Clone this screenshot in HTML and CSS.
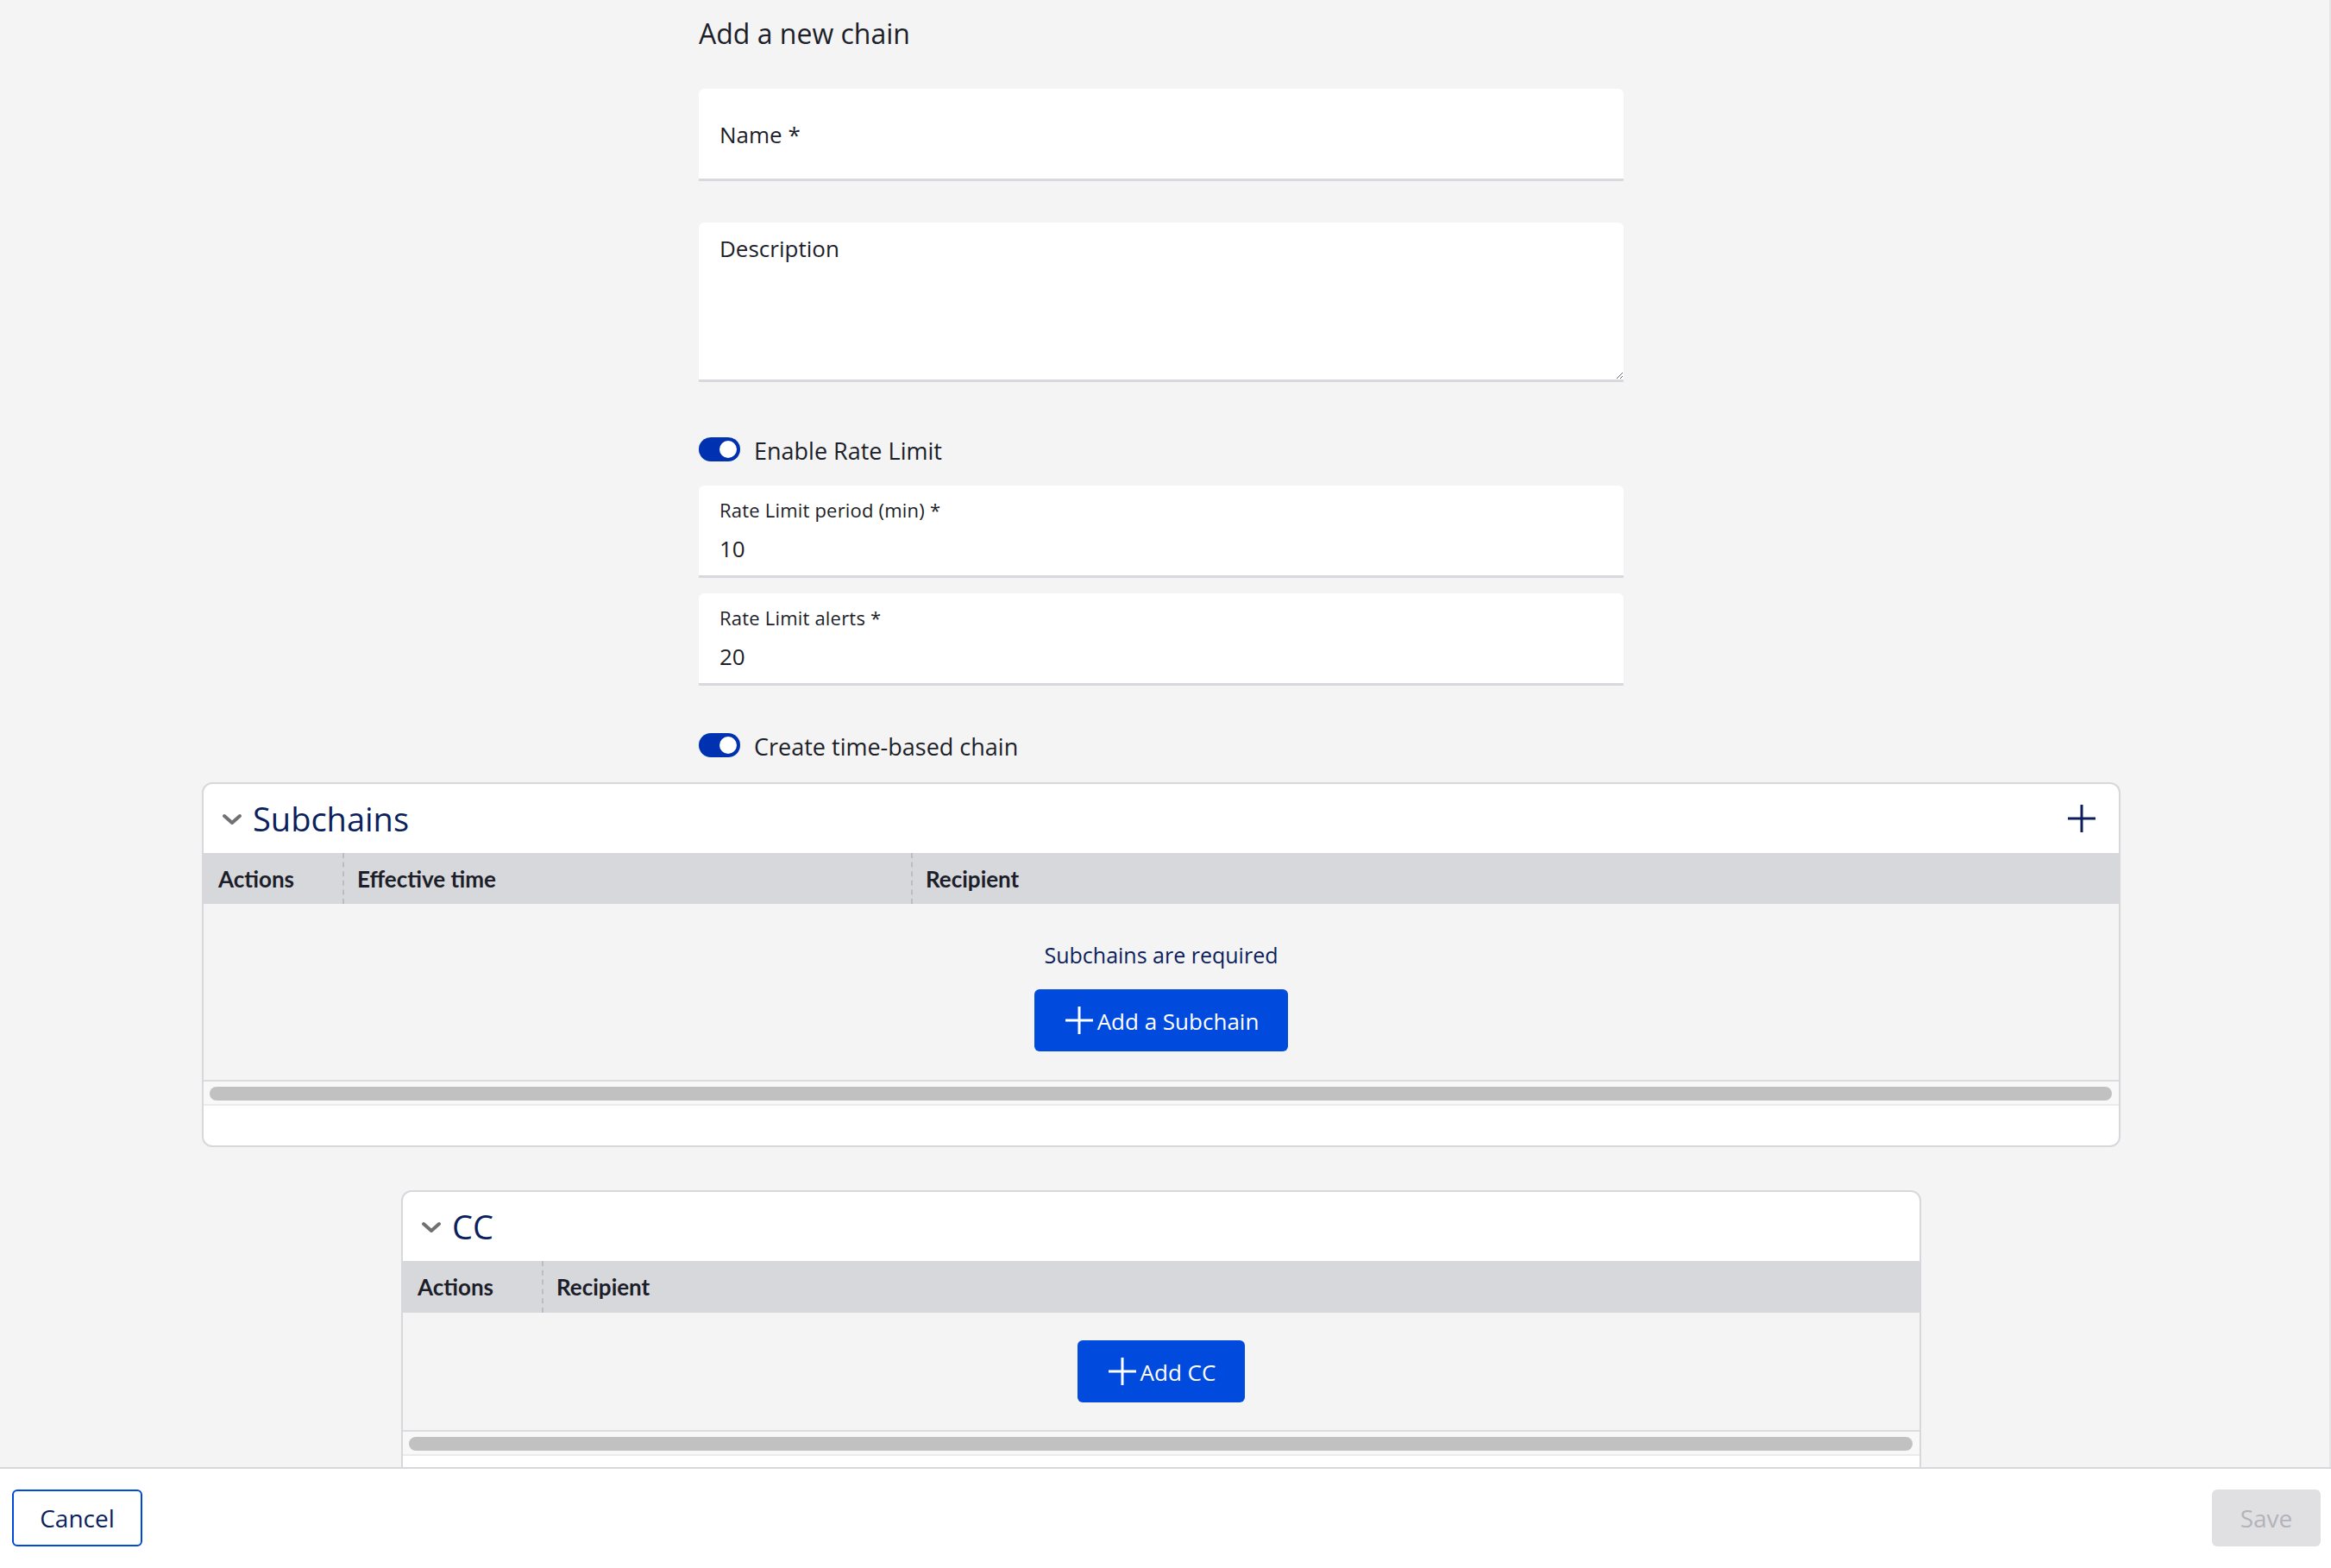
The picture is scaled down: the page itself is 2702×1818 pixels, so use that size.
FILE: index.html
```html
<!DOCTYPE html>
<html lang="en">
<head>
  <meta charset="UTF-8" />
  <meta name="viewport" content="width=device-width, initial-scale=1.0"/>
  <title>Add a new chain</title>
  <link rel="stylesheet" href="styles.css">
</head>
<body>

<div class="app">
  <div class="scroll">

    <div class="form">
      <h1 class="page-title">Add a new chain</h1>

      <!-- Name -->
      <div class="field field-name">
        <input type="text" name="name" placeholder="Name *" />
      </div>

      <!-- Description -->
      <div class="field field-desc">
        <textarea name="description" placeholder="Description"></textarea>
      </div>

      <div class="switch-row switch-rate">
        <span class="switch on"></span>
        <span class="switch-label">Enable Rate Limit</span>
      </div>

      <div class="field field-small">
        <label for="ratePeriod">Rate Limit period (min) *</label>
        <input type="text" id="ratePeriod" value="10" />
      </div>

      <div class="field field-small field-alerts">
        <label for="rateAlerts">Rate Limit alerts *</label>
        <input type="text" id="rateAlerts" value="20" />
      </div>

      <div class="switch-row switch-time">
        <span class="switch on"></span>
        <span class="switch-label">Create time-based chain</span>
      </div>
    </div>

    <!-- Subchains -->
    <section class="panel panel-sub">
      <div class="panel-head">
        <svg class="chevron" width="24" height="14" viewBox="0 0 24 14"><path d="M3 3 L12 11 L21 3" fill="none" stroke="#707174" stroke-width="4" stroke-linecap="round" stroke-linejoin="round"/></svg>
        <h2 class="panel-title">Subchains</h2>
        <svg class="head-plus" width="32" height="32" viewBox="0 0 32 32"><path d="M16 0 V32 M0 16 H32" stroke="#0b1f5e" stroke-width="3"/></svg>
      </div>
      <div class="table-head">
        <div class="col col-actions">Actions</div>
        <div class="col col-time">Effective time</div>
        <div class="col col-rest">Recipient</div>
      </div>
      <div class="table-body">
        <div class="empty-msg">Subchains are required</div>
        <button class="btn-add">
          <svg width="32" height="32" viewBox="0 0 32 32"><path d="M16 0 V32 M0 16 H32" stroke="#fff" stroke-width="3"/></svg>
          <span>Add a Subchain</span>
        </button>
      </div>
      <div class="hscroll"><div class="thumb"></div></div>
      <div class="panel-foot"></div>
    </section>

    <!-- CC -->
    <section class="panel panel-cc">
      <div class="panel-head">
        <svg class="chevron" width="24" height="14" viewBox="0 0 24 14"><path d="M3 3 L12 11 L21 3" fill="none" stroke="#707174" stroke-width="4" stroke-linecap="round" stroke-linejoin="round"/></svg>
        <h2 class="panel-title">CC</h2>
      </div>
      <div class="table-head">
        <div class="col col-actions">Actions</div>
        <div class="col col-rest">Recipient</div>
      </div>
      <div class="table-body cc-body">
        <button class="btn-add">
          <svg width="32" height="32" viewBox="0 0 32 32"><path d="M16 0 V32 M0 16 H32" stroke="#fff" stroke-width="3"/></svg>
          <span>Add CC</span>
        </button>
      </div>
      <div class="hscroll"><div class="thumb"></div></div>
      <div class="panel-foot"></div>
    </section>

  </div>

  <footer class="footer">
    <button class="btn-cancel">Cancel</button>
    <button class="btn-save" disabled>Save</button>
  </footer>
</div>

</body>
</html>
```

FILE: styles.css
```css
html, body { margin: 0; padding: 0; height: 100%; }
body { font-family: "Open Sans", "Noto Sans", sans-serif; background: #f4f4f4; color: #1c1e29; overflow: hidden; }

.app { display: flex; flex-direction: column; height: 100vh; }
.scroll { flex: 1; min-height: 0; overflow: hidden; display: flex; flex-direction: column; align-items: center; padding-right: 8px; border-right: 2px solid #e4e4e6; }

/* form */
.form { width: 1072px; flex-shrink: 0; }
.page-title { margin: 0; padding-top: 21px; font-size: 32px; line-height: 36px; font-weight: 400; color: #1c1e29; }

.field { background: #fff; border-radius: 6px 6px 0 0; border-bottom: 3px solid #d8d9de; box-sizing: border-box; }
.field input, .field textarea { display: block; width: 100%; box-sizing: border-box; border: none; outline: none; background: transparent; font-family: "Open Sans", "Noto Sans", sans-serif; color: #1c1e29; padding: 0; }
.field input::placeholder, .field textarea::placeholder { color: #1c1e29; opacity: 1; }

.field-name { margin-top: 46px; height: 107px; display: flex; align-items: center; padding: 2px 24px 0; }
.field-name input { font-size: 26px; line-height: 34px; height: 34px; }

.field-desc { margin-top: 48px; height: 185px; }
.field-desc textarea { height: 182px; padding: 14px 24px; font-size: 26px; line-height: 32px; resize: vertical; }

.switch-row { display: flex; align-items: center; gap: 16px; height: 28px; }
.switch-rate { margin-top: 64px; }
.switch-time { margin-top: 55px; }
.switch { width: 48px; height: 28px; border-radius: 14px; background: #0031b0; position: relative; flex-shrink: 0; }
.switch::after { content: ""; position: absolute; top: 4px; right: 4px; width: 20px; height: 20px; border-radius: 50%; background: #fff; }
.switch-label { font-size: 27px; line-height: 28px; padding-top: 4px; }

.field-small { margin-top: 28px; height: 107px; padding: 14px 24px 0; }
.field-small label { display: block; font-size: 22px; line-height: 28px; letter-spacing: 0.2px; }
.field-small input { margin-top: 14px; font-size: 26px; line-height: 34px; height: 34px; }
.field-alerts { margin-top: 18px; }

/* panels */
.panel { flex-shrink: 0; background: #fff; border: 2px solid #d8d8dc; border-radius: 12px; overflow: hidden; box-sizing: border-box; }
.panel-sub { width: 2224px; margin-top: 29px; }
.panel-cc { width: 1762px; margin-top: 50px; }

.panel-head { height: 80px; display: flex; align-items: center; padding: 0 27px 0 21px; }
.chevron { margin-right: 12px; margin-top: 2px; }
.panel-title { margin: 0; font-size: 38px; line-height: 40px; font-weight: 400; color: #0b1f5e; flex: 1; }

.table-head { display: flex; height: 59px; background: #d7d8dc; font-family: Lato, "Open Sans", sans-serif; font-size: 26px; font-weight: 700; }
.panel-cc .table-head { height: 60px; }
.col { display: flex; align-items: center; padding-left: 17px; box-sizing: border-box; }
.col-actions { width: 161px; }
.col-time { width: 659px; border-left: 2px dashed #bcbdc3; padding-left: 15px; }
.col-rest { flex: 1; border-left: 2px dashed #bcbdc3; padding-left: 15px; }

.table-body { background: #f4f4f4; display: flex; flex-direction: column; align-items: center; padding: 44px 0 33px; }
.empty-msg { font-size: 25px; line-height: 30px; color: #0b1f5e; margin-bottom: 25px; }
.cc-body { padding: 32px 0; }

.btn-add { display: inline-flex; align-items: center; gap: 5px; height: 72px; padding: 0 34px 0 36px; background: #004ade; color: #fff; border: none; border-radius: 6px; font-family: "Open Sans", "Noto Sans", sans-serif; font-size: 26px; cursor: pointer; }
.btn-add span { padding-top: 2px; }

.hscroll { border-top: 2px solid #dcdce0; border-bottom: 2px solid #ebebeb; background: #f8f8f8; padding: 6px 8px 4px 7px; }
.thumb { height: 16px; border-radius: 8px; background: #c1c1c1; }
.panel-foot { height: 46px; }

/* footer */
.footer { flex-shrink: 0; height: 117px; box-sizing: border-box; border-top: 2px solid #d8d8dc; background: #fff; display: flex; justify-content: space-between; align-items: flex-start; padding: 24px 12px 0 14px; }
.footer button { height: 66px; border-radius: 6px; font-family: "Open Sans", "Noto Sans", sans-serif; font-size: 28px; }
.btn-cancel { width: 151px; background: #fff; border: 2px solid #0049d6; color: #0b1f5e; cursor: pointer; }
.btn-save { width: 126px; background: #e0e0e2; border: none; color: #b3b3bb; }
```
